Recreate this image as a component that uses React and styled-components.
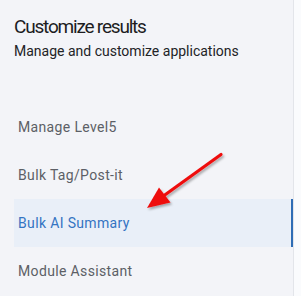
import React from "react";
import styled, { createGlobalStyle } from "styled-components";

const Global = createGlobalStyle`
  html, body { margin: 0; padding: 0; background: #fafbfd; }
  body { font-family: Roboto, "Noto Sans", Arial, sans-serif; }
`;

const Page = styled.div`
  position: relative;
  width: 301px;
  height: 296px;
  display: flex;
  overflow: hidden;
  background: #fafbfd;
`;

const Sidebar = styled.aside`
  flex: none;
  box-sizing: border-box;
  width: 294px;
  background: #f3f4f8;
  border-right: 1px solid #e3e5ea;
  padding-left: 14px;
  display: flex;
  flex-direction: column;
`;

const Header = styled.header`
  padding-top: 15px;
  margin-bottom: 42px;
`;

const Title = styled.h1`
  margin: 0;
  font-size: 19px;
  line-height: 24px;
  letter-spacing: -1.2px;
  font-weight: 400;
  color: #1d1d1f;
`;

const Subtitle = styled.p`
  margin: 2px 0 0;
  font-size: 14px;
  line-height: 20px;
  color: #222326;
`;

const Menu = styled.nav`
  display: flex;
  flex-direction: column;
`;

const Item = styled.div`
  height: 48px;
  display: flex;
  align-items: center;
  padding-left: 4px;
  font-size: 14px;
  line-height: 20px;
  letter-spacing: 0.35px;
  color: ${(p) => (p.$active ? "#3474c2" : "#5c5f66")};
  background: ${(p) => (p.$active ? "#e9eff8" : "transparent")};
  border-right: 2px solid ${(p) => (p.$active ? "#2f6db5" : "transparent")};
`;

const Overlay = styled.svg`
  position: absolute;
  left: 0;
  top: 0;
  pointer-events: none;
`;

const items = ["Manage Level5", "Bulk Tag/Post-it", "Bulk AI Summary", "Module Assistant"];

export default function App() {
  return (
    <>
      <Global />
      <Page>
        <Sidebar>
          <Header>
            <Title>Customize results</Title>
            <Subtitle>Manage and customize applications</Subtitle>
          </Header>
          <Menu>
            {items.map((t) => (
              <Item key={t} $active={t === "Bulk AI Summary"}>
                {t}
              </Item>
            ))}
          </Menu>
        </Sidebar>
        <Overlay width="301" height="296" viewBox="0 0 301 296">
          <defs>
            <filter id="sh" x="-20%" y="-20%" width="140%" height="140%">
              <feDropShadow dx="1.5" dy="2" stdDeviation="1.2" floodColor="#000" floodOpacity="0.3" />
            </filter>
          </defs>
          <g filter="url(#sh)">
            <line x1="221" y1="154.5" x2="162" y2="197" stroke="#ee1111" strokeWidth="3.2" strokeLinecap="round" />
            <polygon points="147,208 159,187.5 170.5,202.5" fill="#ee1111" />
          </g>
        </Overlay>
      </Page>
    </>
  );
}
